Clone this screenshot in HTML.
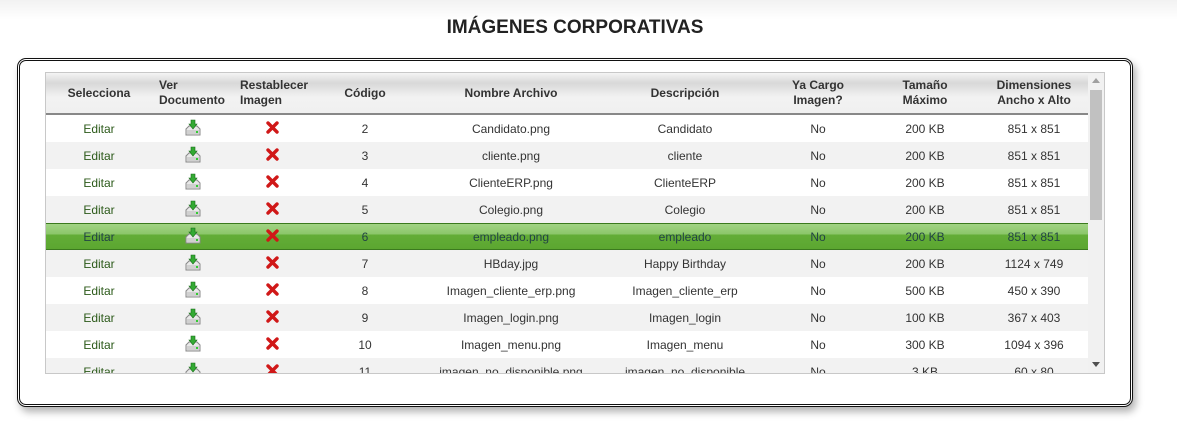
<!DOCTYPE html>
<html><head><meta charset="utf-8"><style>
body{margin:0;width:1177px;height:434px;background:#fff;font-family:"Liberation Sans",sans-serif;position:relative;overflow:hidden}
.top{position:absolute;left:0;top:0;width:1177px;height:20px;background:linear-gradient(#f2f2f2,#fff)}
h1{position:absolute;top:17px;left:0;width:1150px;text-align:center;margin:0;font-size:19px;font-weight:bold;color:#222}
.box{position:absolute;left:17px;top:58px;width:1110px;height:343px;border:3px double #111;border-radius:9px;box-shadow:3px 5px 8px rgba(0,0,0,.3);background:#fff}
.grid{position:absolute;left:45px;top:72px;width:1058px;height:300px;border:1px solid #c8c8c8;overflow:hidden;background:#fff}
table{position:absolute;left:0;top:0;width:1042px;border-collapse:collapse;font-size:12px;color:#333}
th{height:40px;padding:0;font-weight:bold;font-size:12px;color:#333;background:linear-gradient(#f4f4f4,#d8d8d8 25%,#f2f2f2 60%,#f0f0f0);border-bottom:2px solid #888;line-height:15px}
td{height:27px;padding:0;text-align:center}
tr.a td{background:#f2f2f2}
tr.s td{background:linear-gradient(#a4d586,#8cc76b 40%,#63ad37 45%,#5ba630);box-shadow:inset 0 1px 0 #3b7a1e,inset 0 -1px 0 #3b7a1e;color:#244}
.ed{color:#2c5a1a}
.sb{position:absolute;left:1042px;top:0;width:16px;height:300px;background:#f1f1f1}
.th{position:absolute;left:1044px;top:17px;width:12px;height:130px;background:#c1c1c1}
</style></head><body>
<div class="top"></div>
<h1>IMÁGENES CORPORATIVAS</h1>
<div class="box"></div>
<div class="grid">
<table>
<colgroup><col style="width:106px"><col style="width:81px"><col style="width:79px"><col style="width:106px"><col style="width:186px"><col style="width:162px"><col style="width:104px"><col style="width:110px"><col style="width:108px"></colgroup>
<tr><th>Selecciona</th><th style="text-align:left;padding-left:7px">Ver<br>Documento</th><th style="text-align:left;padding-left:7px">Restablecer<br>Imagen</th><th>Código</th><th>Nombre Archivo</th><th>Descripción</th><th>Ya Cargo<br>Imagen?</th><th>Tamaño<br>Máximo</th><th>Dimensiones<br>Ancho x Alto</th></tr>
<tbody id="b"></tbody>
</table>
<div class="sb"></div><div class="th"></div>
<div style="position:absolute;left:1046px;top:5px;width:0;height:0;border-left:4px solid transparent;border-right:4px solid transparent;border-bottom:5px solid #a0a0a0"></div>
<div style="position:absolute;left:1046px;top:289px;width:0;height:0;border-left:4px solid transparent;border-right:4px solid transparent;border-top:5px solid #505050"></div>
</div>
<script>
var d=[["2","Candidato.png","Candidato","200 KB","851 x 851"],["3","cliente.png","cliente","200 KB","851 x 851"],["4","ClienteERP.png","ClienteERP","200 KB","851 x 851"],["5","Colegio.png","Colegio","200 KB","851 x 851"],["6","empleado.png","empleado","200 KB","851 x 851"],["7","HBday.jpg","Happy Birthday","200 KB","1124 x 749"],["8","Imagen_cliente_erp.png","Imagen_cliente_erp","500 KB","450 x 390"],["9","Imagen_login.png","Imagen_login","100 KB","367 x 403"],["10","Imagen_menu.png","Imagen_menu","300 KB","1094 x 396"],["11","imagen_no_disponible.png","imagen_no_disponible","3 KB","60 x 80"]];
var ic='<svg width="18" height="17" viewBox="0 0 18 17"><path d="M2 10 L5 7 H13 L16 10 V16 H2Z" fill="#e8e8e8" stroke="#888"/><rect x="3" y="11" width="12" height="4" fill="#d0d0d0"/><rect x="12" y="12" width="2" height="2" fill="#3c3"/><path d="M7 1 H11 V5 H13 L9 10 L5 5 H7Z" fill="#3a3" stroke="#186b18" stroke-width=".6"/></svg>';
var x='<svg width="13" height="13" viewBox="0 0 13 13"><path d="M2 2 L11 11 M11 2 L2 11" stroke="#d01818" stroke-width="3.4" stroke-linecap="round"/></svg>';
var h='';d.forEach(function(r,i){h+='<tr class="'+(i==4?'s':(i%2?'a':''))+'"><td class="ed">Editar</td><td>'+ic+'</td><td>'+x+'</td><td>'+r[0]+'</td><td>'+r[1]+'</td><td>'+r[2]+'</td><td>No</td><td>'+r[3]+'</td><td>'+r[4]+'</td></tr>'});
document.getElementById('b').innerHTML=h;
</script>
</body></html>
